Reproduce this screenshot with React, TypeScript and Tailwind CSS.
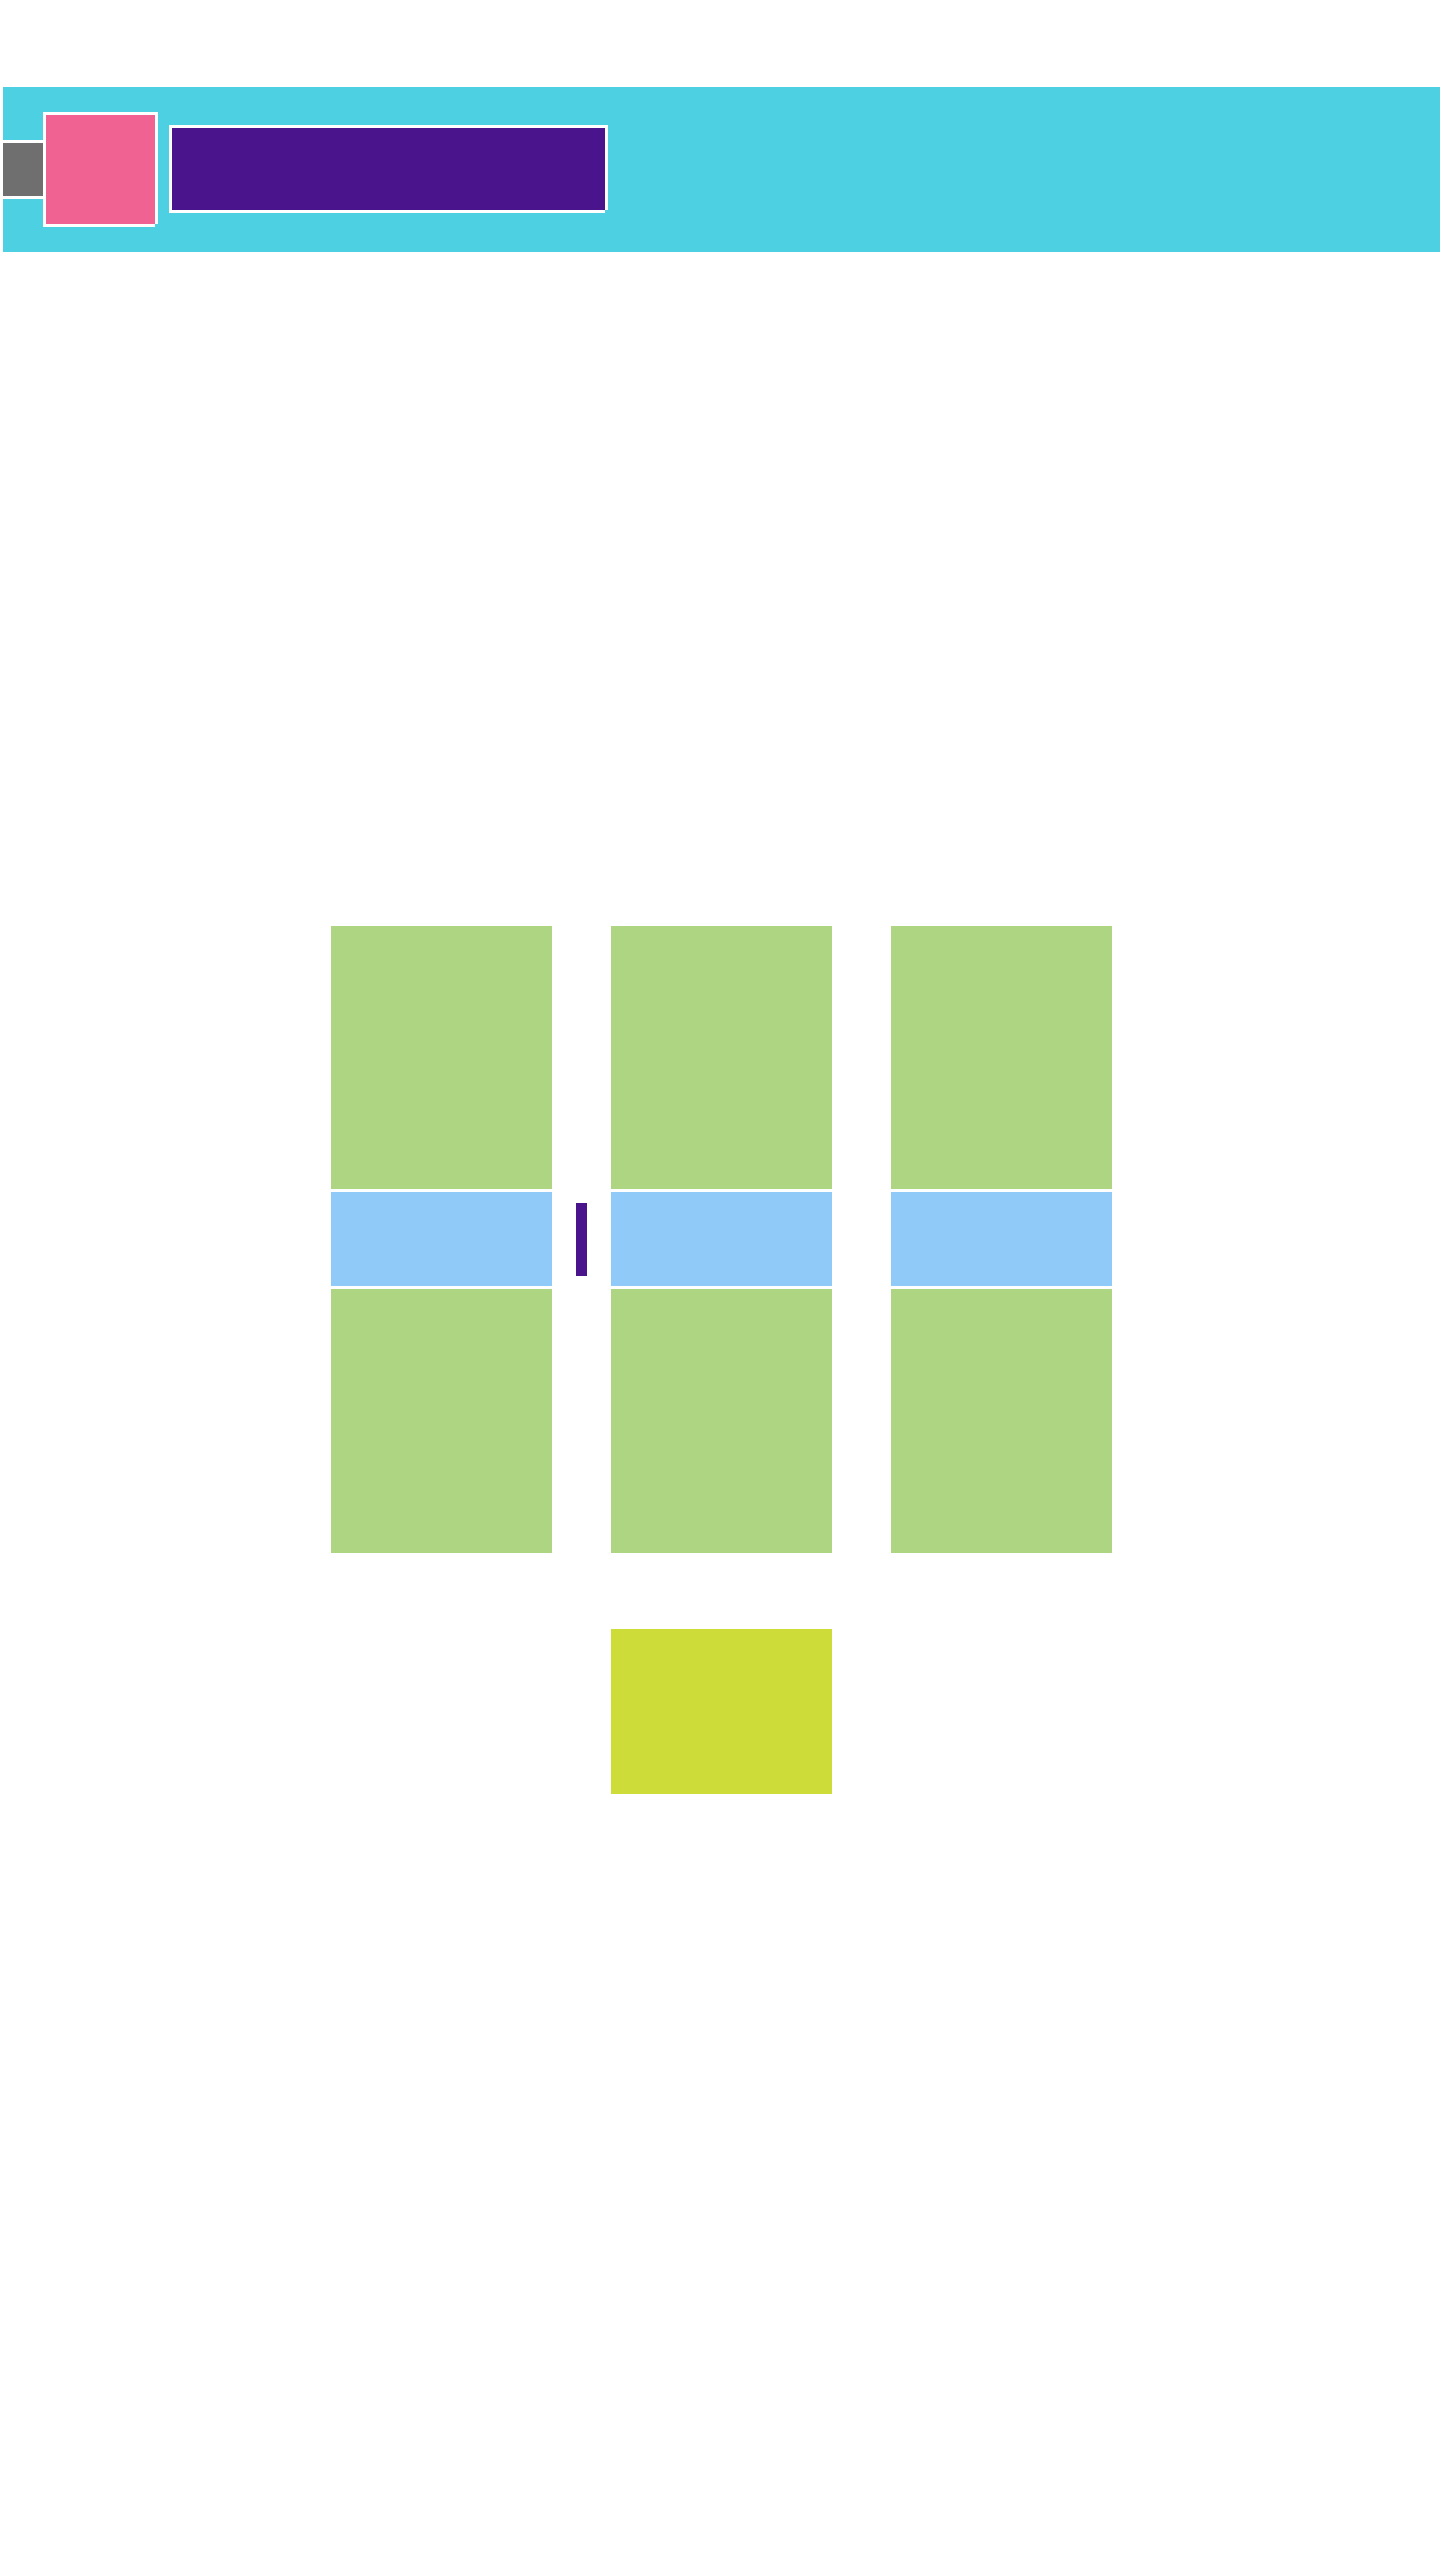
const Column = () => (
  <div className="flex w-[221px] flex-col gap-[3px]">
    <div className="h-[263px] bg-[#aed581]" />
    <div className="h-[94px] bg-[#90caf9]" />
    <div className="h-[264px] bg-[#aed581]" />
  </div>
)

const Header = () => (
  <div className="mt-[87px] flex h-[165px] items-start bg-[#4dd0e1]">
    <div className="mt-[53px] h-[56px] w-[40px] border-t-[3px] border-white bg-[#6f6f6f] shadow-[0_3px_0_0_#ffffff]" />
    <div className="mt-[25px] h-[112px] w-[112px] border-t-[3px] border-l-[3px] border-white bg-[#f06292] shadow-[3px_0_0_0_#ffffff,0_3px_0_0_#ffffff]" />
    <div className="mt-[38px] ml-[14px] h-[85px] w-[436px] border-t-[3px] border-l-[3px] border-white bg-[#4a148c] shadow-[3px_0_0_0_#ffffff,0_3px_0_0_#ffffff]" />
  </div>
)

export default function App() {
  return (
    <div className="min-h-[2560px] bg-white pl-[3px]">
      <Header />

      <div className="mt-[674px] flex justify-center">
        <div className="flex items-center">
          <Column />
          <div className="flex w-[59px] items-center justify-center">
            <div className="h-[73px] w-[11px] bg-[#4a148c]" />
          </div>
          <Column />
          <div className="w-[59px]" />
          <Column />
        </div>
      </div>

      <div className="mt-[76px] flex justify-center">
        <div className="h-[165px] w-[221px] bg-[#cddc39]" />
      </div>
    </div>
  )
}
